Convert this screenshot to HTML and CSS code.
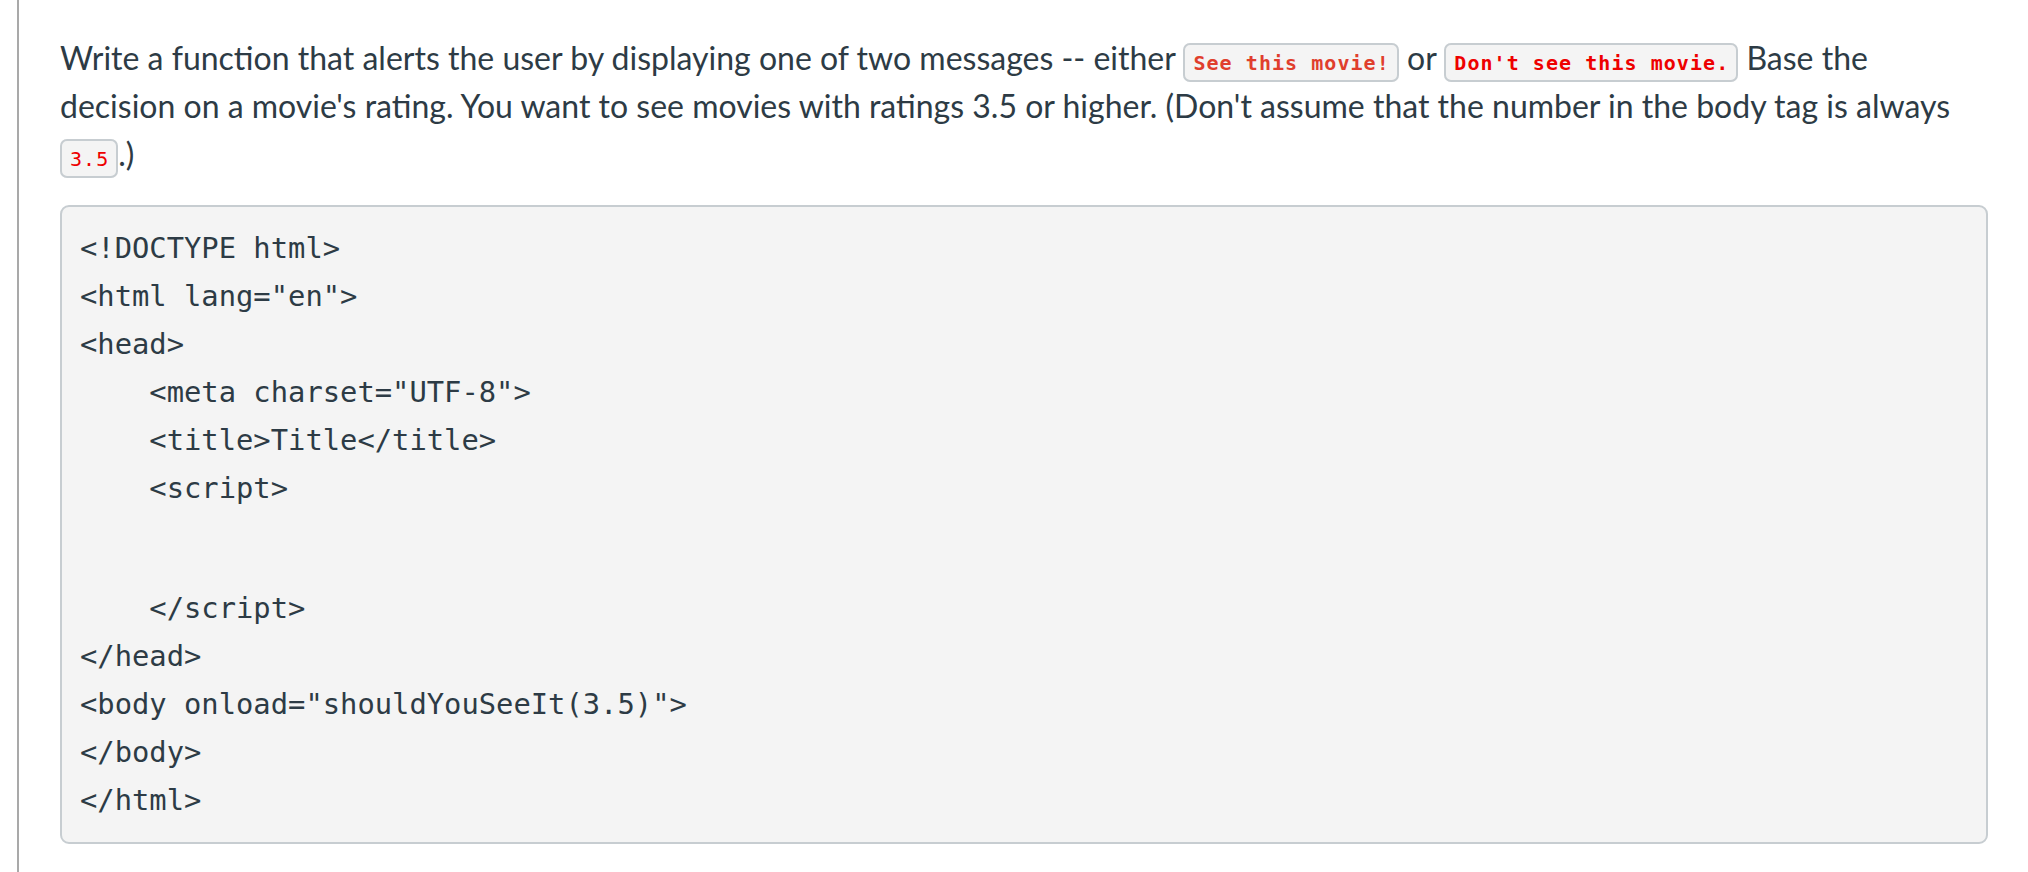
FILE: index.html
```html
<!DOCTYPE html>
<html lang="en">
<head>
<meta charset="UTF-8">
<title>Exercise</title>
<link rel="stylesheet" href="styles.css">
</head>
<body>
<main class="page">
  <p class="prompt">Write a function that alerts the user by displaying one of two messages -- either <code class="chip chip-bold chip-orange">See this movie!</code> or <code class="chip chip-bold chip-red">Don't see this movie.</code> Base the decision on a movie's rating. You want to see movies with ratings 3.5 or higher. (Don't assume that the number in the body tag is always <code class="chip chip-red">3.5</code>.)</p>
  <div class="code-block">
    <div class="line">&lt;!DOCTYPE html&gt;</div>
    <div class="line">&lt;html lang="en"&gt;</div>
    <div class="line">&lt;head&gt;</div>
    <div class="line">    &lt;meta charset="UTF-8"&gt;</div>
    <div class="line">    &lt;title&gt;Title&lt;/title&gt;</div>
    <div class="line">    &lt;script&gt;</div>
    <div class="gap"></div>
    <div class="line">    &lt;/script&gt;</div>
    <div class="line">&lt;/head&gt;</div>
    <div class="line">&lt;body onload="shouldYouSeeIt(3.5)"&gt;</div>
    <div class="line">&lt;/body&gt;</div>
    <div class="line">&lt;/html&gt;</div>
  </div>
</main>
</body>
</html>
```
FILE: styles.css
```css
html, body {
  margin: 0;
  padding: 0;
  background: #ffffff;
}

.page {
  box-sizing: border-box;
  min-height: 100vh;
  margin-left: 17px;
  border-left: 2px solid #a9a9a9;
  padding: 34px 40px 0 41px;
  font-family: Lato, "Noto Sans", sans-serif;
  font-size: 32px;
  line-height: 48px;
  color: #2d3b45;
}

.prompt {
  margin: 0 0 27px 0;
}

.chip {
  font-family: "DejaVu Sans Mono", monospace;
  font-size: 20px;
  letter-spacing: 1.05px;
  background: #f4f4f4;
  border: 2px solid #c7cdd1;
  border-radius: 7px;
  padding: 5.5px 7px 5.5px 8px;
  line-height: normal;
  vertical-align: 1px;
}

.chip-bold {
  font-weight: bold;
}

.chip-orange {
  color: #e03e2d;
}

.chip-red {
  color: #ee0000;
}

.code-block {
  background: #f4f4f4;
  border: 2px solid #c7cdd1;
  border-radius: 9px;
  padding: 17px 18px 18px 18px;
  font-family: "DejaVu Sans Mono", monospace;
  font-size: 28.8px;
  color: #2d3b45;
}

.line {
  white-space: pre;
  line-height: 48px;
  height: 48px;
}

.gap {
  height: 72px;
}
```
